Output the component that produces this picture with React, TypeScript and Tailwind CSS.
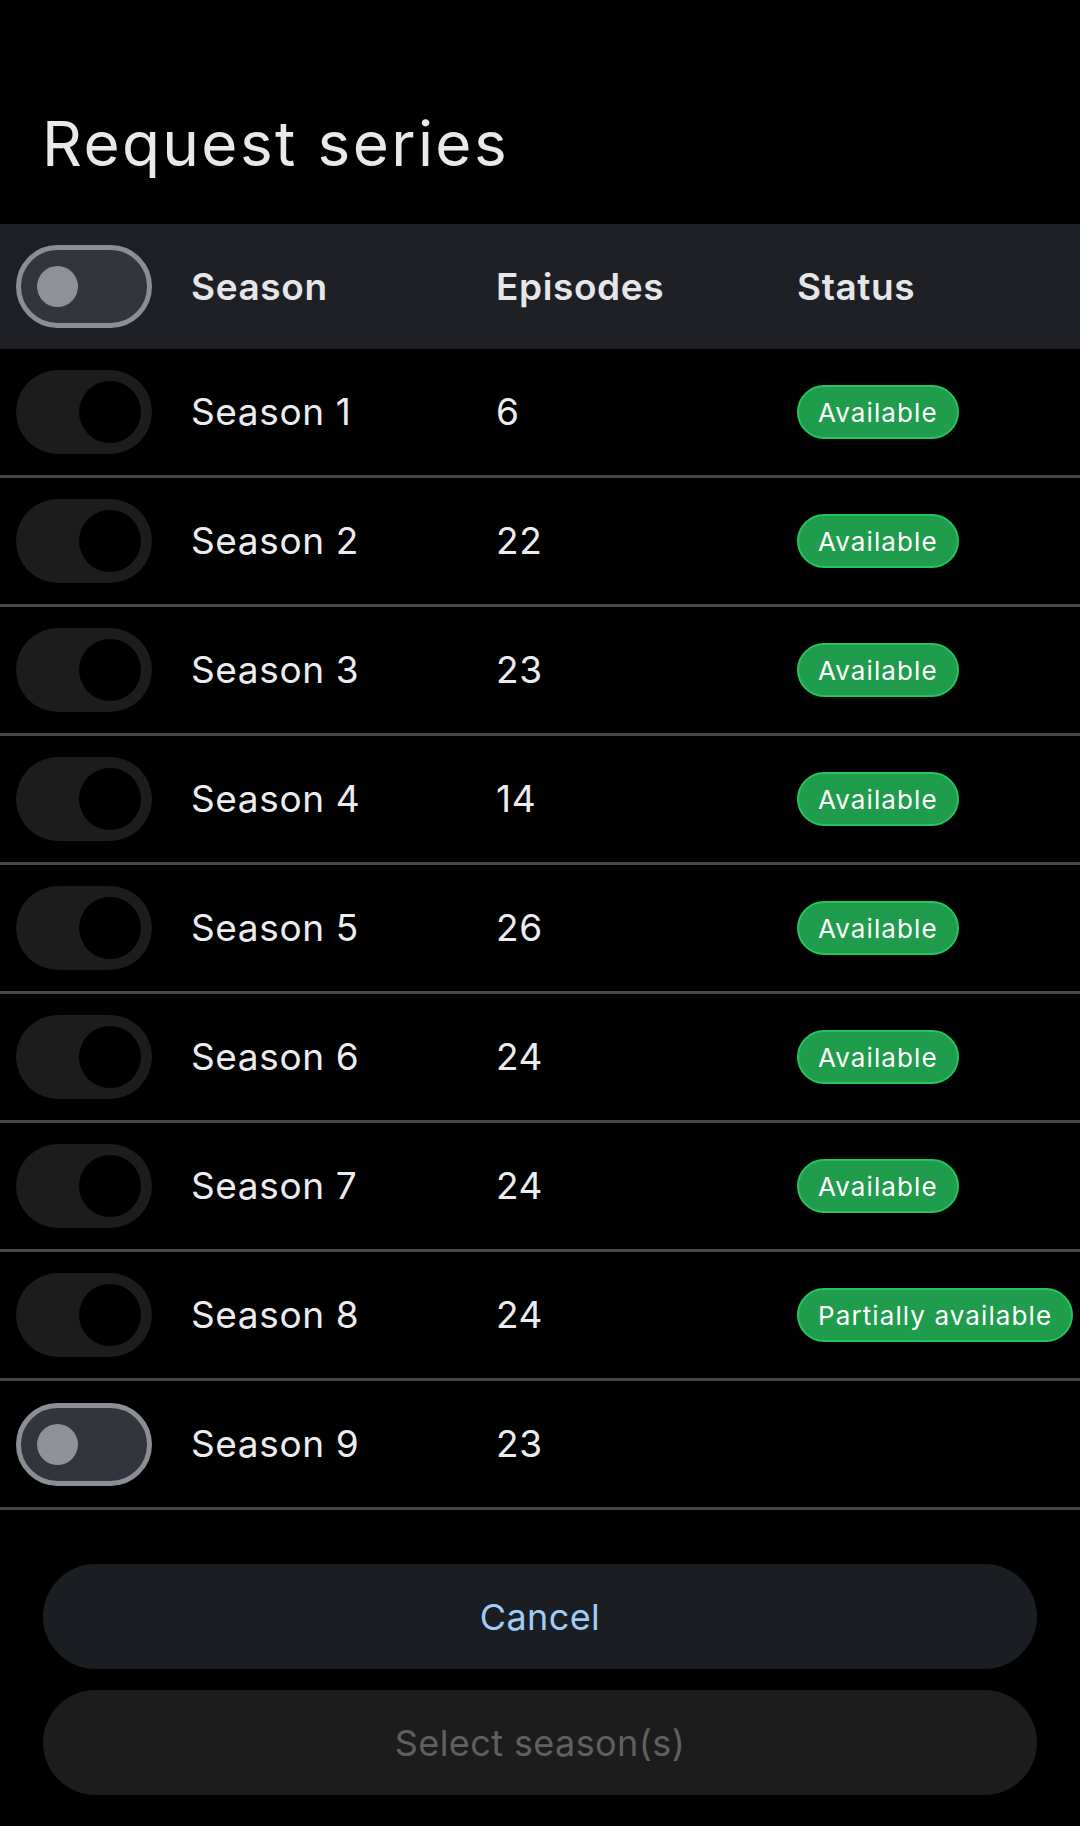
import React from 'react';

type Status = 'Available' | 'Partially available' | null;

interface SeasonRow {
  season: number;
  episodes: number;
  status: Status;
}

const seasons: SeasonRow[] = [
  { season: 1, episodes: 6, status: 'Available' },
  { season: 2, episodes: 22, status: 'Available' },
  { season: 3, episodes: 23, status: 'Available' },
  { season: 4, episodes: 14, status: 'Available' },
  { season: 5, episodes: 26, status: 'Available' },
  { season: 6, episodes: 24, status: 'Available' },
  { season: 7, episodes: 24, status: 'Available' },
  { season: 8, episodes: 24, status: 'Partially available' },
  { season: 9, episodes: 23, status: null },
];

// Toggle that can still be switched (header + season 9)
function OpenToggle() {
  return (
    <div className="ml-[16px] flex h-[83px] w-[136px] items-center rounded-full border-[5px] border-[#8b8e94] bg-[#32353b] pl-[16px]">
      <div className="h-[41px] w-[41px] rounded-full bg-[#8e9197]" />
    </div>
  );
}

// Disabled toggle for seasons already available
function LockedToggle() {
  return (
    <div className="ml-[16px] flex h-[84px] w-[136px] items-center justify-end rounded-full bg-[#1c1c1c] pr-[11px]">
      <div className="h-[62px] w-[62px] rounded-full bg-black" />
    </div>
  );
}

export default function App() {
  const font = { fontFamily: 'Inter, "Noto Sans", sans-serif' };

  return (
    <div className="min-h-[1826px] w-[1080px] bg-black text-[#e6e6eb]" style={font}>
      {/* Title */}
      <div className="h-[224px] pl-[42px] pt-[113px]">
        <h1 className="text-[62px] leading-none font-normal tracking-[2.4px] text-[#e8e8ed]">
          Request series
        </h1>
      </div>

      {/* Table header */}
      <div className="grid h-[125px] grid-cols-[191px_305px_301px_1fr] items-center bg-[#1e2026]">
        <OpenToggle />
        <span className="text-[37px] font-semibold tracking-[0.6px] text-[#e5e6ea]">Season</span>
        <span className="text-[37px] font-semibold tracking-[0.6px] text-[#e5e6ea]">Episodes</span>
        <span className="text-[37px] font-semibold tracking-[0.6px] text-[#e5e6ea]">Status</span>
      </div>

      {/* Rows */}
      {seasons.map((row) => (
        <div
          key={row.season}
          className="grid h-[129px] grid-cols-[191px_305px_301px_1fr] items-center border-b-[3px] border-[#45484f]"
        >
          {row.status ? <LockedToggle /> : <OpenToggle />}
          <span className="text-[37px] tracking-[0.6px] text-[#ececf0]">Season {row.season}</span>
          <span className="text-[37px] tracking-[0.6px] text-[#ececf0]">{row.episodes}</span>
          <div>
            {row.status && (
              <span className="inline-flex h-[54px] items-center whitespace-nowrap rounded-full border-2 border-[#22c55e] bg-[#1f9d4d] px-[19px] text-[26px] tracking-[1.1px] text-white">
                {row.status}
              </span>
            )}
          </div>
        </div>
      ))}

      {/* Actions */}
      <div className="flex flex-col gap-[21px] px-[43px] pt-[54px]">
        <button className="h-[105px] w-full rounded-full bg-[#1a1d22] text-[36px] tracking-[0.4px] text-[#9fcdf7]">
          Cancel
        </button>
        <button className="h-[105px] w-full rounded-full bg-[#1c1c1c] text-[36px] tracking-[0.4px] text-[#606060]" disabled>
          Select season(s)
        </button>
      </div>
    </div>
  );
}
